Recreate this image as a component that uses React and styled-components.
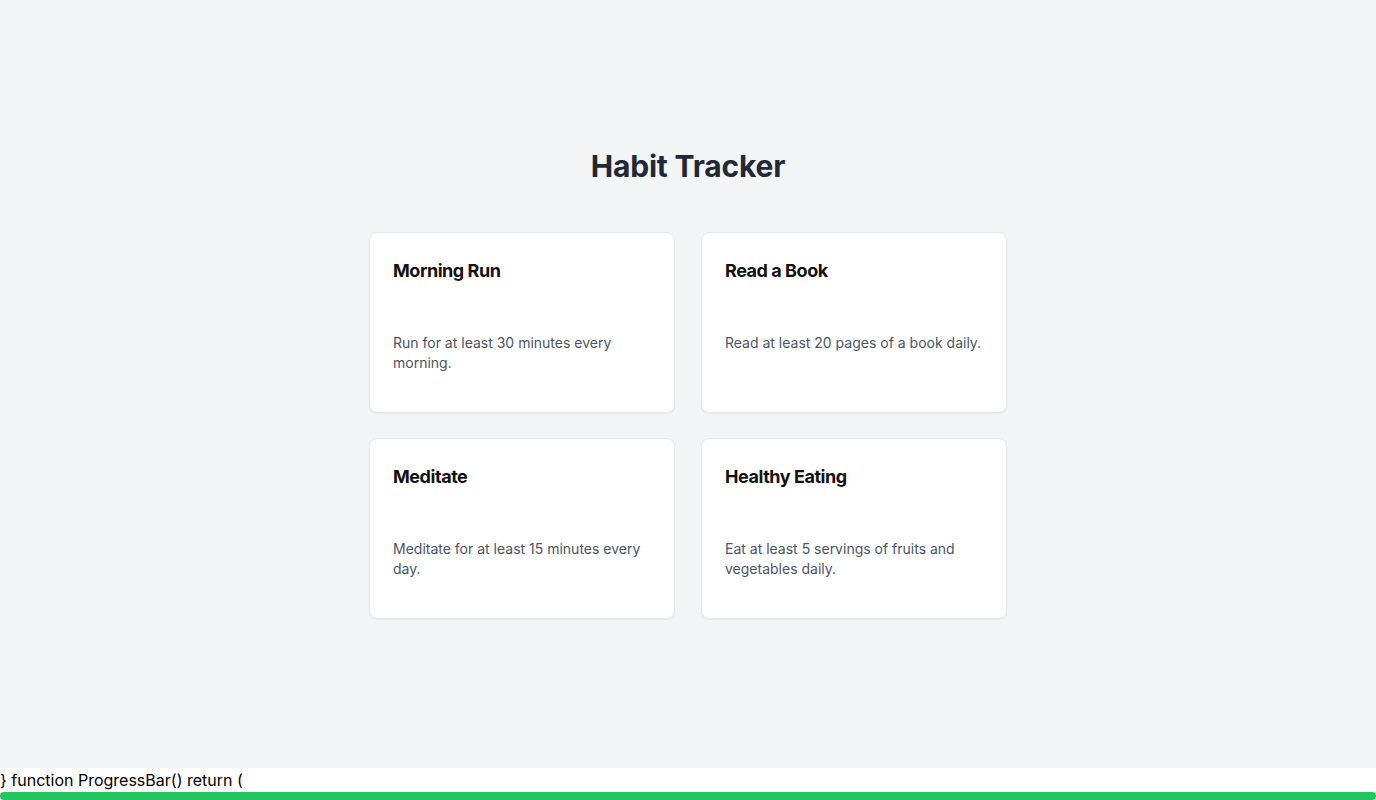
import React from "react";
import styled, { createGlobalStyle } from "styled-components";

const GlobalStyle = createGlobalStyle`
  html, body { margin: 0; padding: 0; background: #ffffff; }
  body { font-family: Inter, "Noto Sans", sans-serif; color: #000; }
  * { box-sizing: border-box; }
`;

const Page = styled.main`
  height: 768px;
  padding-bottom: 1px;
  background: #f3f4f6;
  display: flex;
  flex-direction: column;
  align-items: center;
  justify-content: center;
`;

const Title = styled.h1`
  margin: 0 0 48px;
  font-size: 30px;
  line-height: 36px;
  font-weight: 700;
  color: #1f2937;
  letter-spacing: -0.2px;
`;

const Grid = styled.div`
  width: 638px;
  display: grid;
  grid-template-columns: 1fr 1fr;
  column-gap: 26px;
  row-gap: 25px;
`;

const Card = styled.div`
  min-height: 181px;
  background: #ffffff;
  border: 1px solid #e5e7eb;
  border-radius: 8px;
  box-shadow: 0 1px 2px rgba(0, 0, 0, 0.05);
  padding: 24px 22px 23px 23px;
`;

const CardTitle = styled.h2`
  margin: 0 0 48px;
  font-size: 18px;
  line-height: 28px;
  font-weight: 700;
  color: #111111;
  letter-spacing: -0.45px;
`;

const CardText = styled.p`
  margin: 0;
  font-size: 14px;
  line-height: 20px;
  color: #4b5563;
`;

const CodeLine = styled.div`
  font-size: 16px;
  line-height: 24px;
  color: #000;
  background: #fff;
`;

const Bar = styled.div`
  height: 8px;
  width: 100%;
  background: #22c55e;
  border-radius: 9999px;
`;

const habits = [
  { title: "Morning Run", text: "Run for at least 30 minutes every morning." },
  { title: "Read a Book", text: "Read at least 20 pages of a book daily." },
  { title: "Meditate", text: "Meditate for at least 15 minutes every day." },
  { title: "Healthy Eating", text: "Eat at least 5 servings of fruits and vegetables daily." },
];

export default function App() {
  return (
    <>
      <GlobalStyle />
      <Page>
        <Title>Habit Tracker</Title>
        <Grid>
          {habits.map((h) => (
            <Card key={h.title}>
              <CardTitle>{h.title}</CardTitle>
              <CardText>{h.text}</CardText>
            </Card>
          ))}
        </Grid>
      </Page>
      <CodeLine>{"} function ProgressBar() return ("}</CodeLine>
      <Bar />
    </>
  );
}
